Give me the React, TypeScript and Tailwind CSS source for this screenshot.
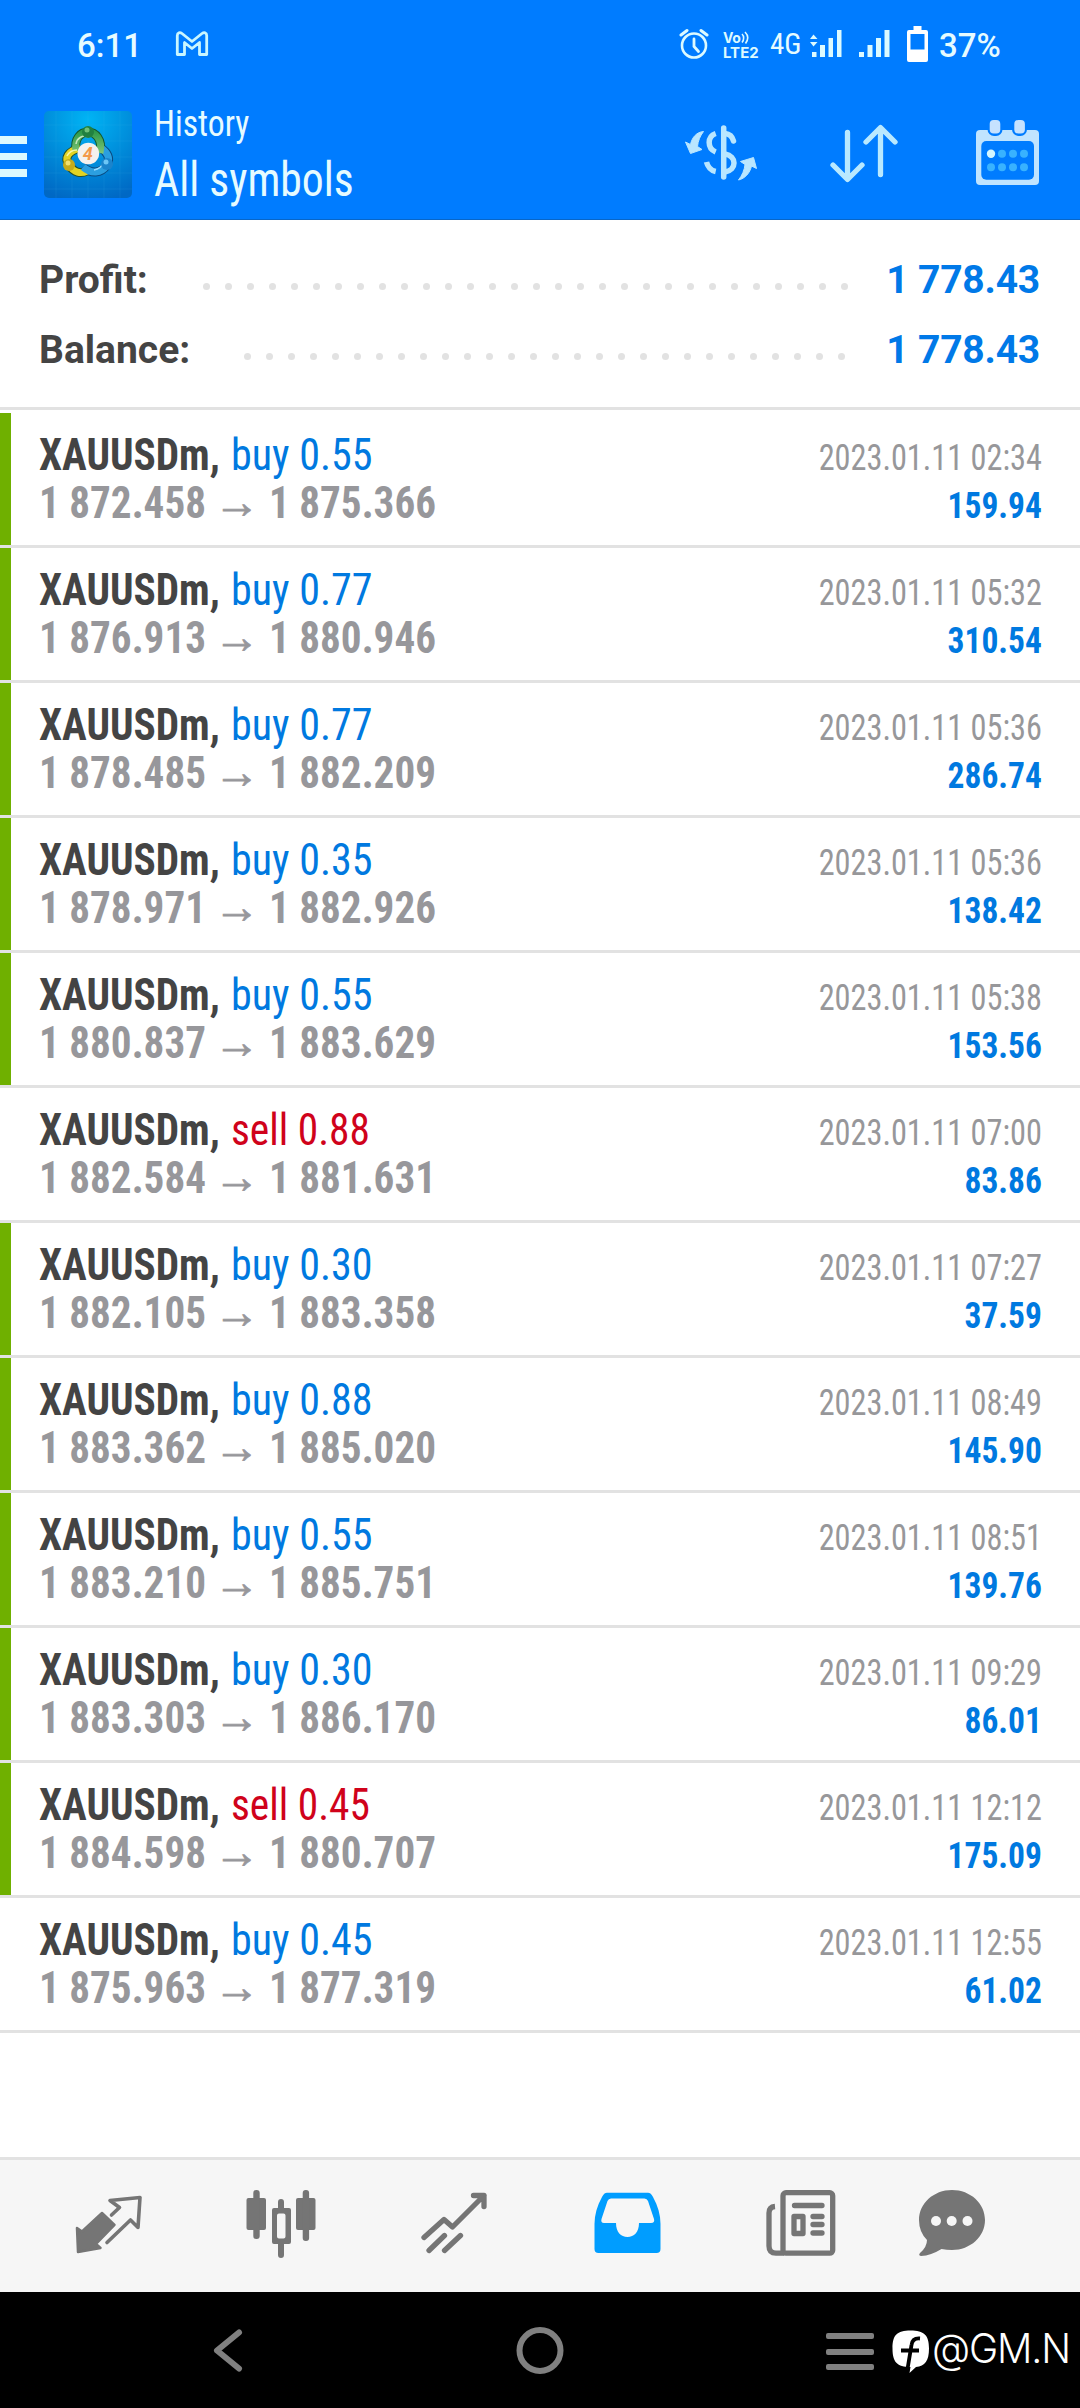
import React from 'react';

interface Deal {
  type: 'buy' | 'sell';
  volume: string;
  open: string;
  close: string;
  time: string;
  profit: string;
  marked: boolean;
}

const deals: Deal[] = [
  { type: 'buy', volume: '0.55', open: '1 872.458', close: '1 875.366', time: '2023.01.11 02:34', profit: '159.94', marked: true },
  { type: 'buy', volume: '0.77', open: '1 876.913', close: '1 880.946', time: '2023.01.11 05:32', profit: '310.54', marked: true },
  { type: 'buy', volume: '0.77', open: '1 878.485', close: '1 882.209', time: '2023.01.11 05:36', profit: '286.74', marked: true },
  { type: 'buy', volume: '0.35', open: '1 878.971', close: '1 882.926', time: '2023.01.11 05:36', profit: '138.42', marked: true },
  { type: 'buy', volume: '0.55', open: '1 880.837', close: '1 883.629', time: '2023.01.11 05:38', profit: '153.56', marked: true },
  { type: 'sell', volume: '0.88', open: '1 882.584', close: '1 881.631', time: '2023.01.11 07:00', profit: '83.86', marked: false },
  { type: 'buy', volume: '0.30', open: '1 882.105', close: '1 883.358', time: '2023.01.11 07:27', profit: '37.59', marked: true },
  { type: 'buy', volume: '0.88', open: '1 883.362', close: '1 885.020', time: '2023.01.11 08:49', profit: '145.90', marked: true },
  { type: 'buy', volume: '0.55', open: '1 883.210', close: '1 885.751', time: '2023.01.11 08:51', profit: '139.76', marked: true },
  { type: 'buy', volume: '0.30', open: '1 883.303', close: '1 886.170', time: '2023.01.11 09:29', profit: '86.01', marked: true },
  { type: 'sell', volume: '0.45', open: '1 884.598', close: '1 880.707', time: '2023.01.11 12:12', profit: '175.09', marked: true },
  { type: 'buy', volume: '0.45', open: '1 875.963', close: '1 877.319', time: '2023.01.11 12:55', profit: '61.02', marked: false },
];

const StatusBar: React.FC = () => (
  <div className="flex h-[100px] items-start pl-[77px] pt-[26px] font-['Roboto',sans-serif] text-[#e6fbff]">
    <span className="mt-[1px] w-[62px] whitespace-nowrap text-[33px] font-medium leading-[38px]">6:11</span>
    {/* Gmail */}
    <svg className="ml-[36px] mt-[5px]" width="34" height="26" viewBox="0 0 34 26" fill="none" stroke="#c9f6ff" strokeWidth="2.8" strokeLinejoin="round">
      <path d="M2.3 23.5V4.5C2.3 1.5 5 1 7 2.5L17 10.5L27 2.5C29 1 31.7 1.5 31.7 4.5V23.5H24.5V11.5L17 17.5L9.5 11.5V23.5Z" />
    </svg>

    {/* Alarm */}
    <svg className="ml-[470px] mt-[2px]" width="30" height="32" viewBox="0 0 30 32" fill="none" stroke="#dcfaff" strokeWidth="2.6" strokeLinecap="round">
      <circle cx="15" cy="17.5" r="12" />
      <path d="M15 11V18.5L19.5 23.5" strokeWidth="2.8" />
      <path d="M2 7L8 2.5M22 2.5L28 7" strokeWidth="3" />
    </svg>
    {/* VoLTE */}
    <div className="relative ml-[14px] mt-[5px] w-[38px] font-['Inter'] font-bold leading-none text-[#dcfaff]">
      <div className="h-[14px] text-[14px] tracking-[-0.4px]">Vo</div>
      <div className="text-[15px] leading-[16px]">LTE2</div>
      <svg className="absolute left-[18px] top-0" width="9" height="13" viewBox="0 0 9 13" fill="none" stroke="#dcfaff" strokeWidth="1.6">
        <path d="M1 3C3.2 5 3.2 9 1 11.5M4 1C7.5 4.5 7.5 8.5 4.5 12.5" />
      </svg>
    </div>
    <span className="ml-[9px] mt-[2px] w-[30px] font-['Roboto_Condensed'] text-[29px] leading-[32px]">4G</span>
    <svg className="ml-[9px] mt-[4px]" width="34" height="28" viewBox="0 0 34 28" fill="#dcfaff">
      <path d="M1 9L4.5 4.5L8.5 9ZM1 12H8.5L4.5 16.5ZM3 22h4.500v5H3ZM11 15h5v12h-5ZM19.500 8h4.500v19h-4.500ZM28 0h4.500v27h-4.500Z" />
    </svg>
    <svg className="ml-[15px] mt-[4px]" width="34" height="28" viewBox="0 0 34 28" fill="#dcfaff">
      <path d="M1 22h5v5H1ZM9.500 15h5v12h-5ZM18 8h5v19h-5ZM26.500 0h5v27h-5Z" />
    </svg>
    <svg className="ml-[14px]" width="23" height="37" viewBox="0 0 23 37" fill="#fff" fillRule="evenodd">
      <path d="M7.500 0h8v4h4.500q2 0 2 2v28q0 2-2 2H3q-2 0-2-2V6q0-2 2-2h4.500ZM4.500 8v15.500h14V8Z" />
    </svg>
    <span className="ml-[10px] mt-[1px] whitespace-nowrap text-[33px] font-medium leading-[38px]">37%</span>
  </div>
);

const AppLogo: React.FC = () => (
  <svg width="88" height="87" viewBox="0 0 88 87" fill="none">
    <defs>
      <radialGradient id="logoBg" cx="0.5" cy="0.1" r="0.95">
        <stop offset="0" stopColor="#00b4f5" />
        <stop offset="0.5" stopColor="#008fdc" />
        <stop offset="1" stopColor="#0068c4" />
      </radialGradient>
      <linearGradient id="logoGreen" x1="0" y1="0" x2="0" y2="1">
        <stop offset="0" stopColor="#2f9a4a" />
        <stop offset="1" stopColor="#7cc576" />
      </linearGradient>
    </defs>
    <rect width="88" height="87" rx="5" fill="url(#logoBg)" />
    <path d="M12 0V87M28 0V87M44 0V87M60 0V87M76 0V87M0 14H88M0 30H88M0 46H88M0 62H88M0 78H88" stroke="#3fb4f0" strokeOpacity="0.12" />
    {/* Yellow, blue and green figures around the badge */}
    <path d="M36 37C24 40 20 47 25 54C30 62 37 63 43 60" stroke="#25502a" strokeWidth="9" />
    <path d="M39 56C47 63 57 63 63 54C67 47 63 41 57 37" stroke="#0a4a80" strokeWidth="9" />
    <path d="M32 40C30 27 37 21 44 21C51 21 59 28 56 42" stroke="#14572c" strokeWidth="9" />
    <path d="M36 37C24 40 20 47 25 54C30 62 37 63 43 60" stroke="#e3d321" strokeWidth="7" />
    <path d="M39 56C47 63 57 63 63 54C67 47 63 41 57 37" stroke="#2b9fe0" strokeWidth="7" />
    <path d="M32 40C30 27 37 21 44 21C51 21 59 28 56 42" stroke="url(#logoGreen)" strokeWidth="7" />
    <path d="M32 33C33 27 38 24 44 26" stroke="#c4e8bc" strokeWidth="1.5" />
    <path d="M23 45C25 41 29 39 33 39" stroke="#fbf6a0" strokeWidth="1.5" />
    <path d="M50 59C55 58 58 55 59 52" stroke="#9adcff" strokeWidth="1.5" />
    <circle cx="44" cy="21" r="6" fill="#218040" />
    <circle cx="43" cy="19" r="2.5" fill="#6fc07a" />
    <circle cx="25" cy="54" r="6" fill="#c4ab1c" />
    <circle cx="24" cy="52" r="2.5" fill="#f0e070" />
    <circle cx="63" cy="53" r="6" fill="#1b84cc" />
    <circle cx="62" cy="51" r="2.5" fill="#6cc6f6" />
    <circle cx="44.3" cy="42.5" r="10.8" fill="#f4f1ee" />
    <text x="43.8" y="49" textAnchor="middle" fill="#f39a4a" fontFamily="Roboto" fontWeight="700" fontStyle="italic" fontSize="18">4</text>
  </svg>
);

const CurrencyIcon: React.FC = () => (
  <svg width="76" height="60" viewBox="684 122 76 60" fill="none" stroke="#b9e6ff" strokeWidth="5.5">
    <path d="M724.7 128V177" strokeLinecap="round" />
    <path d="M716.7 133.5C708 136.5 708 148.5 716.7 152" />
    <path d="M707.5 162C708.5 166.5 712 170.5 716.7 171.5" />
    <path d="M726 133.5C731 134 733.5 137 734.5 141" strokeLinecap="round" />
    <path d="M726 154C738 156 738 170 726 172" />
    <g fill="#b9e6ff" strokeWidth="1" strokeLinejoin="round">
      <path d="M704.5 131.5C698 132 693 137 691.5 144.5L686.5 142L691.5 153.5L703 149.5L698.5 146.5C699 141 701 136 704.5 131.5Z" />
      <path d="M739.5 180C746 178.5 751 173 752.5 166L757.5 168.5L754.5 157.5L741.5 161.5L746 164.5C745.5 170 743 175.5 739.5 180Z" />
    </g>
  </svg>
);

const SortIcon: React.FC = () => (
  <svg width="72" height="62" viewBox="829 122 72 62" fill="none" stroke="#b9e9ff" strokeWidth="5.3" strokeLinecap="round" strokeLinejoin="round">
    <path d="M848.5 132.5V179M834 165L848.5 179.5L863 165" />
    <path d="M881.5 174.5V128M867 142L881.5 127.5L896 142" />
  </svg>
);

const CalendarIcon: React.FC = () => (
  <svg width="65" height="68" viewBox="976 119 65 68" fill="none">
    <rect x="977" y="130" width="63" height="55" rx="4" fill="#c0e4ff" />
    <rect x="982.3" y="141" width="52.7" height="38.7" rx="5" fill="#007cff" />
    <rect x="988.5" y="117.5" width="15" height="18.5" rx="6.5" fill="#007cff" />
    <rect x="1013" y="117.5" width="15" height="18.5" rx="6.5" fill="#007cff" />
    <rect x="990.7" y="120" width="10.6" height="13.5" rx="4" fill="#c6e2ff" />
    <rect x="1015.3" y="120" width="10.6" height="13.5" rx="4" fill="#c6e2ff" />
    <circle cx="992" cy="153.7" r="4.2" fill="#d4f6ff" />
    <g fill="#38b2ff">
      <circle cx="1003" cy="153.7" r="4" />
      <circle cx="1014" cy="153.7" r="4" />
      <circle cx="1025" cy="153.7" r="4" />
      <circle cx="992" cy="167.3" r="4" />
      <circle cx="1003" cy="167.3" r="4" />
      <circle cx="1014" cy="167.3" r="4" />
      <circle cx="1025" cy="167.3" r="4" />
    </g>
  </svg>
);

const Header: React.FC = () => (
  <div className="flex h-[120px] items-start border-b border-[#0866c8] font-['Roboto_Condensed',sans-serif] text-[#e6fbff]">
    <div className="mt-[36px] flex w-[27px] flex-col gap-[9px]">
      <div className="h-[7.5px] bg-[#dcf9ff]" />
      <div className="h-[7.5px] bg-[#dcf9ff]" />
      <div className="h-[7.5px] bg-[#dcf9ff]" />
    </div>
    <div className="ml-[17px] mt-[11px]">
      <AppLogo />
    </div>
    <div className="ml-[22px] w-[300px] whitespace-nowrap">
      <div className="mt-[3px] origin-left scale-x-[0.925] text-[36.5px] leading-[42px]">History</div>
      <div className="mt-[7px] origin-left scale-x-[0.92] text-[47.5px] leading-[56px]">All symbols</div>
    </div>
    <div className="ml-[229px] mt-[22px]"><CurrencyIcon /></div>
    <div className="ml-[69px] mt-[22px]"><SortIcon /></div>
    <div className="ml-[75px] mt-[19px]"><CalendarIcon /></div>
  </div>
);

interface SummaryRowProps {
  label: string;
  value: string;
  dots: number;
  dotsClass: string;
}

const SummaryRow: React.FC<SummaryRowProps> = ({ label, value, dots, dotsClass }) => (
  <div className="flex h-[70px] items-center whitespace-nowrap font-['Roboto',sans-serif] text-[39px] font-bold leading-[46px]">
    <span className="text-[#444]">{label}</span>
    <div className={`flex flex-1 justify-end gap-[15px] pt-[13px] ${dotsClass}`}>
      {Array.from({ length: dots }, (_, i) => (
        <span key={i} className="size-[7px] rounded-full bg-[#e2e2e2]" />
      ))}
    </div>
    <span className="flex w-[151px] justify-end tracking-[-0.2px] text-[#0079e8]">{value}</span>
  </div>
);

const DealRow: React.FC<{ deal: Deal }> = ({ deal }) => (
  <div className="flex h-[135px] border-b-3 border-[#e2e2e2] font-['Roboto_Condensed',sans-serif]">
    <div className={`w-[11px] ${deal.marked ? 'bg-[#6fb000]' : ''}`} />
    <div className="flex flex-1 justify-between whitespace-nowrap pl-[28px] pr-[38px] pt-[16px]">
      <div>
        <div className="flex text-[44px] leading-[52px]">
          <span className="w-[192px] origin-left scale-x-[0.938] font-bold text-[#444]">XAUUSDm,</span>
          <span className={`origin-left ${deal.type === 'buy' ? 'scale-x-[0.955] text-[#0079e0]' : 'scale-x-[0.94] text-[#d0021b]'}`}>
            {deal.type} {deal.volume}
          </span>
        </div>
        <div className="mt-[-4px] flex text-[44px] font-bold leading-[52px] text-[#97979b]">
          <span className="w-[175px] origin-left scale-x-[0.935]">{deal.open}</span>
          <span className="w-[55px] font-['Liberation_Sans'] text-[46px] font-normal leading-[51px] [-webkit-text-stroke:0.8px_#97979b]">→</span>
          <span className="origin-left scale-x-[0.935]">{deal.close}</span>
        </div>
      </div>
      <div className="text-right text-[36px]">
        <div className="mt-[5px] origin-right scale-x-[0.897] leading-[48px] text-[#97979a]">{deal.time}</div>
        <div className="origin-right scale-x-[0.93] font-bold leading-[48px] text-[#0079e0]">{deal.profit}</div>
      </div>
    </div>
  </div>
);

const TabBar: React.FC = () => (
  <div className="flex h-[135px] items-start border-t-3 border-[#e2e2e2] bg-[#f6f6f6] pl-[72px] pt-[28px]">
    {/* Quotes */}
    <svg className="mt-[3px]" width="74" height="70" viewBox="72 51 74 70" fill="none" stroke="#757575" strokeLinejoin="round">
      <path d="M77 88L82 91.5L102 73L114.5 85L96 104L100.5 108L78 112Z" fill="#757575" strokeWidth="2.5" />
      <path d="M111.5 75L119.5 67.5L110 60.5L140 57.5L138 87.5L130.5 80L107 102.5" strokeWidth="3.6" strokeLinecap="round" />
    </svg>
    {/* Chart */}
    <svg className="ml-[99px]" width="74" height="70" viewBox="245 48 74 70" fill="#757575">
      <rect x="246.5" y="58" width="19.5" height="32" rx="2" />
      <rect x="253.3" y="50" width="6.4" height="49" rx="3" />
      <path fillRule="evenodd" d="M274 68h15q2 0 2 2v32q0 2-2 2h-15q-2 0-2-2V70q0-2 2-2ZM279 73.5q-2 0-2 2v21q0 2 2 2h4.5q2 0 2-2v-21q0-2-2-2Z" />
      <path d="M278 69v-7q0-3 3-3t3 3v7ZM278 103v12q0 3 3 3t3-3v-12Z" />
      <rect x="296" y="58" width="19.5" height="32" rx="2" />
      <rect x="302.7" y="50" width="6.4" height="51" rx="3" />
    </svg>
    {/* Trade */}
    <svg className="ml-[101px]" width="70" height="70" viewBox="420 48 70 70" fill="none" stroke="#757575" strokeWidth="5.3" strokeLinecap="round" strokeLinejoin="round">
      <path d="M424 97.5L444 79.5L452.5 87L484 55.5M473.5 55.5H484V66.5" />
      <path d="M429 110.5L444.5 95.5M444.5 110.5L460.5 95.5" />
    </svg>
    {/* History */}
    <svg className="ml-[103px]" width="68" height="70" viewBox="593 48 68 70" fill="#009dff" fillRule="evenodd">
      <path d="M607 52.7H648Q651 52.7 653 57C658 66 660.5 75 660.5 84V109Q660.5 113 656.5 113H598.5Q594.5 113 594.5 109V84C594.5 75 597 66 602 57Q604 52.7 607 52.7ZM611 58.5Q608.5 58.5 607.5 61L601.5 79Q600.5 83 604 83H616C616 92 621 97 627.5 97S639 92 639 83H651Q655 83 654 79L648 61Q647 58.5 644.5 58.5Z" />
    </svg>
    {/* News */}
    <svg className="ml-[104px]" width="72" height="70" viewBox="765 48 72 70" fill="none" stroke="#757575" strokeWidth="5.3" strokeLinecap="round">
      <rect x="783" y="52.7" width="49.7" height="60.5" rx="3" />
      <path d="M775 66.5Q769 67 769 73V106Q769 113.2 776 113.2H784" strokeLinecap="butt" />
      <path d="M794.5 65.5H822M813 76.5H822M813 84.5H822M813 93H822" />
      <rect x="794" y="76.5" width="9" height="17" strokeLinejoin="round" />
    </svg>
    {/* Messages */}
    <svg className="ml-[82px]" width="70" height="70" viewBox="920 48 70 70" fill="#757575">
      <path d="M953 50C971.5 50 986 63.5 986 80S971.5 110 953 110Q947.5 110 942.5 109Q932 115.5 922 116Q919 115.5 921 113Q928 107 928 100Q920 92 920 80C920 63.5 934.5 50 953 50Z" />
      <circle cx="937" cy="81" r="5" fill="#f6f6f6" />
      <circle cx="952.7" cy="81" r="5" fill="#f6f6f6" />
      <circle cx="968.5" cy="81" r="5" fill="#f6f6f6" />
    </svg>
  </div>
);

const SystemBar: React.FC = () => (
  <div className="flex h-[116px] items-start bg-black pl-[212px] pt-[34px]">
    <svg width="32" height="50" viewBox="212 34 32 50" fill="none" stroke="#808080" strokeWidth="6" strokeLinecap="round" strokeLinejoin="round">
      <path d="M239 40.5L217 58.5L239 76.5" />
    </svg>
    <svg className="ml-[271px]" width="50" height="50" viewBox="0 0 50 50" fill="none" stroke="#808080" strokeWidth="6">
      <circle cx="25" cy="24.5" r="20.5" />
    </svg>
    <div className="ml-[261px] mt-[7px] flex w-[48px] flex-col gap-[9.5px]">
      <div className="h-[6px] rounded-[2px] bg-[#808080]" />
      <div className="h-[6px] rounded-[2px] bg-[#808080]" />
      <div className="h-[6px] rounded-[2px] bg-[#808080]" />
    </div>
    <svg className="ml-[18px] mt-[4px]" width="38" height="44" viewBox="0 0 38 44" fill="none">
      <path d="M18.5 0.5C32 0.5 37 5 37 18.5C37 31 33 36 24 37L17.5 43L18.5 37C5 37 0.5 32 0.5 18.5C0.5 5 5 0.5 18.5 0.5Z" fill="#fff" />
      <path d="M28 8.5C22 8 20 11 19.5 15L15.5 39M9 20.5H27" stroke="#000" strokeWidth="3.8" />
    </svg>
    <span className="ml-[2px] origin-left scale-x-[0.97] font-['Inter',sans-serif] text-[40.5px] font-light leading-[46px] tracking-[-1.2px] text-white">@GM.N</span>
  </div>
);

export default function App() {
  return (
    <div className="flex h-[2408px] w-[1080px] flex-col overflow-hidden bg-white">
      <div className="bg-[#007cff]">
        <StatusBar />
        <Header />
      </div>

      <div className="h-[190px] border-b-3 border-[#e2e2e2] pl-[39px] pr-[40px] pt-[25px]">
        <SummaryRow label="Profit:" value="1 778.43" dots={30} dotsClass="pr-[41px]" />
        <SummaryRow label="Balance:" value="1 778.43" dots={28} dotsClass="pr-[44px]" />
      </div>

      <div className="flex-1 pt-[3px]">
        {deals.map((deal) => (
          <DealRow key={deal.open} deal={deal} />
        ))}
      </div>

      <TabBar />
      <SystemBar />
    </div>
  );
}
